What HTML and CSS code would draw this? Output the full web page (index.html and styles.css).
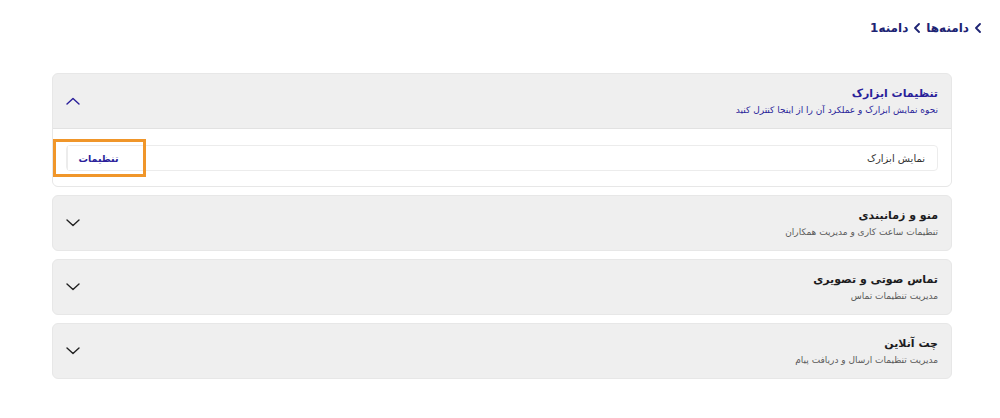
FILE: index.html
```html
<!DOCTYPE html>
<html lang="fa" dir="rtl">
<head>
  <meta charset="UTF-8">
  <meta name="viewport" content="width=device-width, initial-scale=1.0">
  <link rel="stylesheet" href="styles.css">
  <title>دامنه1</title>
</head>
<body>
  <div class="breadcrumb">
    <span class="crumb_sep">
      <svg width="8" height="10" viewBox="0 0 8 10"><path d="M6 1 L2 5 L6 9" fill="none" stroke="currentColor" stroke-width="1.8" stroke-linecap="round" stroke-linejoin="round"/></svg>
    </span>
    <a class="crumb">دامنه‌ها</a>
    <span class="crumb_sep">
      <svg width="8" height="10" viewBox="0 0 8 10"><path d="M6 1 L2 5 L6 9" fill="none" stroke="currentColor" stroke-width="1.8" stroke-linecap="round" stroke-linejoin="round"/></svg>
    </span>
    <a class="crumb">دامنه1</a>
  </div>

  <div class="accordion">
    <div class="acc_item open">
      <div class="acc_header">
        <div class="acc_texts">
          <p class="acc_title">تنظیمات ابزارک</p>
          <p class="acc_desc">نحوه نمایش ابزارک و عملکرد آن را از اینجا کنترل کنید</p>
        </div>
        <svg class="acc_icon" width="14" height="8" viewBox="0 0 14 8"><path d="M1 7 L7 1.5 L13 7" fill="none" stroke="currentColor" stroke-width="1.4" stroke-linecap="round" stroke-linejoin="round"/></svg>
      </div>
      <div class="acc_body">
        <div class="setting_row">
          <span class="setting_label">نمایش ابزارک</span>
          <div class="setting_btn_wrap">
            <button class="setting_btn">تنظیمات</button>
            <span class="highlight"></span>
          </div>
        </div>
      </div>
    </div>

    <div class="acc_item">
      <div class="acc_header">
        <div class="acc_texts">
          <p class="acc_title">منو و زمانبندی</p>
          <p class="acc_desc">تنظیمات ساعت کاری و مدیریت همکاران</p>
        </div>
        <svg class="acc_icon" width="14" height="8" viewBox="0 0 14 8"><path d="M1 1 L7 6.5 L13 1" fill="none" stroke="currentColor" stroke-width="1.4" stroke-linecap="round" stroke-linejoin="round"/></svg>
      </div>
    </div>

    <div class="acc_item">
      <div class="acc_header">
        <div class="acc_texts">
          <p class="acc_title">تماس صوتی و تصویری</p>
          <p class="acc_desc">مدیریت تنظیمات تماس</p>
        </div>
        <svg class="acc_icon" width="14" height="8" viewBox="0 0 14 8"><path d="M1 1 L7 6.5 L13 1" fill="none" stroke="currentColor" stroke-width="1.4" stroke-linecap="round" stroke-linejoin="round"/></svg>
      </div>
    </div>

    <div class="acc_item">
      <div class="acc_header">
        <div class="acc_texts">
          <p class="acc_title">چت آنلاین</p>
          <p class="acc_desc">مدیریت تنظیمات ارسال و دریافت پیام</p>
        </div>
        <svg class="acc_icon" width="14" height="8" viewBox="0 0 14 8"><path d="M1 1 L7 6.5 L13 1" fill="none" stroke="currentColor" stroke-width="1.4" stroke-linecap="round" stroke-linejoin="round"/></svg>
      </div>
    </div>
  </div>
</body>
</html>
```

FILE: styles.css
```css
/* Basics */
body {
  margin: 0;
  padding: 18px 18px 0 48px;
  font-family: "DejaVu Sans", "Noto Sans", sans-serif;
  background-color: #ffffff;
  color: #1c1c1e;
}

p {
  margin: 0;
}

/* Breadcrumb */
.breadcrumb {
  display: flex;
  align-items: center;
  gap: 5px;
  height: 20px;
  color: #1d2373;
  font-size: 12px;
  font-weight: bold;
}

.crumb_sep {
  display: flex;
  align-items: center;
}

/* Accordion */
.accordion {
  display: flex;
  flex-direction: column;
  gap: 8px;
  width: 900px;
  margin: 35px 30px 0 0;
}

.acc_item {
  border: 1px solid #e7e7e7;
  border-radius: 6px;
  background-color: #efefef;
  overflow: hidden;
}

.acc_header {
  display: flex;
  justify-content: space-between;
  align-items: center;
  height: 54px;
  padding: 0 13px 0 13px;
}

.acc_texts {
  display: flex;
  flex-direction: column;
  gap: 5px;
}

.acc_title {
  font-size: 11px;
  font-weight: bold;
  color: #1c1c1e;
}

.acc_desc {
  font-size: 9px;
  color: #5a5a5a;
}

.acc_icon {
  color: #222222;
}

.open .acc_title,
.open .acc_desc,
.open .acc_icon {
  color: #2a1f9a;
}

.open .acc_header {
  border-bottom: 1px solid #e2e2e2;
}

.acc_body {
  background-color: #ffffff;
  padding: 16px 13px 15px 13px;
}

.setting_row {
  display: flex;
  justify-content: space-between;
  align-items: center;
  height: 24px;
  border: 1px solid #ececec;
  border-radius: 4px;
  padding-right: 12px;
}

.setting_label {
  font-size: 10px;
  color: #333333;
}

.setting_btn_wrap {
  position: relative;
  height: 100%;
}

.setting_btn {
  height: 100%;
  width: 62px;
  border: none;
  border-left: 1px solid #ececec;
  background-color: #ffffff;
  font-family: inherit;
  font-size: 9.5px;
  font-weight: bold;
  color: #2a1f9a;
  cursor: pointer;
}

/* annotation box over the button */
.highlight {
  position: absolute;
  top: -7px;
  left: -14px;
  width: 87px;
  height: 32px;
  border: 3px solid #f0962a;
  pointer-events: none;
}
```
